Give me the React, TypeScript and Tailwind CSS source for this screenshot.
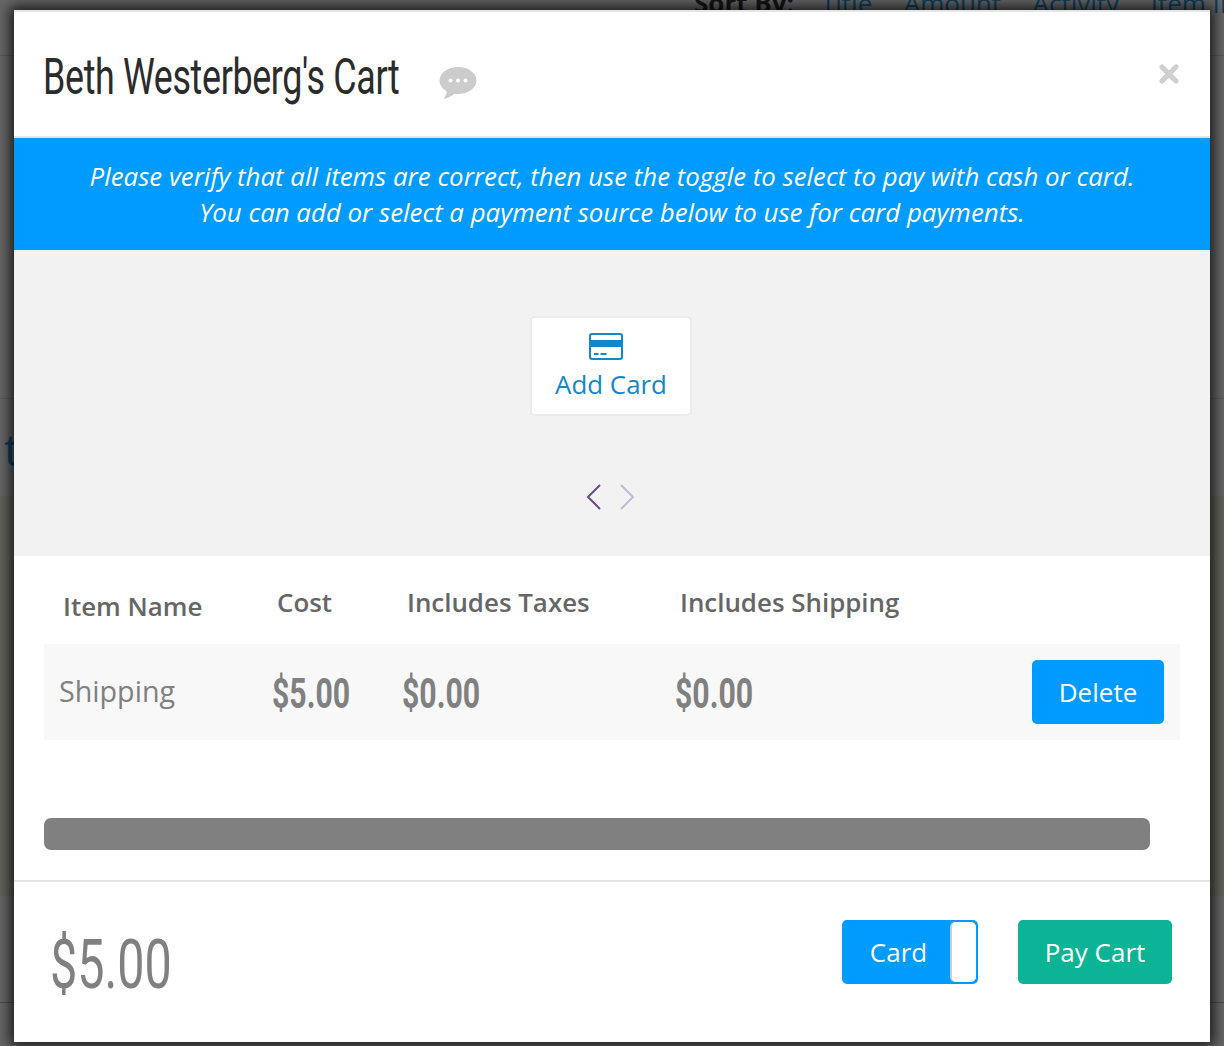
import { X } from "lucide-react"

const bodyFont = "font-['Open_Sans',sans-serif]"
// the price and title face is a tall condensed one, so Roboto gets squeezed into its width
const headFont = "font-['Roboto',sans-serif]"

function ChatIcon() {
  return (
    <svg viewBox="0 0 38 34" className="h-[34px] w-[38px]" aria-hidden="true">
      <path
        fill="#cccccc"
        d="M19 1C8.8 1 .5 7.1.5 14.6c0 4.4 2.9 8.3 7.3 10.8-.3 2.6-1.6 5.1-3.2 7.4 3.9-.4 8-2.6 10.7-5 1.2.2 2.4.3 3.7.3 10.2 0 18.5-6 18.5-13.5S29.2 1 19 1z"
      />
      <circle cx="11.5" cy="14.5" r="2" fill="#fff" />
      <circle cx="19" cy="14.5" r="2" fill="#fff" />
      <circle cx="26.5" cy="14.5" r="2" fill="#fff" />
    </svg>
  )
}

function CardIcon() {
  return (
    <svg viewBox="0 0 34 27" className="mr-[10px] h-[27px] w-[34px]" aria-hidden="true">
      <rect x="1" y="1" width="32" height="25" rx="2" fill="none" stroke="#1587c8" strokeWidth="2" />
      <rect x="1" y="7" width="32" height="7" fill="#1587c8" />
      <rect x="5" y="20" width="4.5" height="2" fill="#1587c8" />
      <rect x="11.5" y="20" width="6" height="2" fill="#1587c8" />
    </svg>
  )
}

function Arrows() {
  return (
    <div className="mr-[4px] mt-[67px] flex items-center gap-[17px]">
      <svg viewBox="0 0 16 28" className="h-[28px] w-[16px]" aria-hidden="true">
        <path d="M14 2 2 14l12 12" fill="none" stroke="#6b4a8f" strokeWidth="2" />
      </svg>
      <svg viewBox="0 0 16 28" className="h-[28px] w-[16px]" aria-hidden="true">
        <path d="m2 2 12 12L2 26" fill="none" stroke="#c6b9d6" strokeWidth="2" />
      </svg>
    </div>
  )
}

export default function App() {
  return (
    <div className={`relative h-[1046px] w-[1224px] overflow-hidden bg-[#666666] ${bodyFont}`}>
      {/* dimmed page behind the modal */}
      <div className="absolute left-0 top-[55px] h-px w-full bg-[#5a5a5a]" />
      <div className="absolute left-0 top-[398px] h-px w-full bg-[#5a5a5a]" />
      <div className="absolute left-0 top-[1002px] h-px w-full bg-[#4c4c4c]" />
      <div className="absolute left-0 top-[496px] h-[400px] w-full bg-[#62625a]" />
      <div className="absolute left-[694px] top-[-15px] flex gap-[31.5px] whitespace-nowrap text-[26px] leading-[36px] text-[#0b3f63]">
        <span className="mr-[-4.5px] font-bold text-[#151515]">Sort By:</span>
        <span>Title</span>
        <span>Amount</span>
        <span>Activity</span>
        <span>Item ID</span>
      </div>
      <span className="absolute left-[4px] top-[425px] text-[44px] leading-[48px] text-[#0b3f63]">t</span>

      <div className="absolute left-[14px] top-[10px] flex h-[1032px] w-[1196px] flex-col bg-white shadow-[0_0_12px_4px_rgba(0,0,0,0.75)]">
        <header className="relative flex h-[128px] shrink-0 items-start border-y-2 border-[#e5e5e5] pl-[29px]">
          <h1 className={`mt-[36px] w-[355px] origin-left scale-x-[0.717] whitespace-nowrap text-[50px] leading-[58px] tracking-[-0.5px] text-[#2b2b2b] ${headFont}`}>
            Beth Westerberg's Cart
          </h1>
          <div className="ml-[41px] mt-[54px]">
            <ChatIcon />
          </div>
          <X className="absolute right-[27px] top-[48px] h-[28px] w-[28px] text-[#cfcfcf]" strokeWidth={4.5} />
        </header>

        <div className="flex h-[112px] shrink-0 flex-col items-center justify-center bg-[#009bff] text-[25.85px] italic leading-[36px] text-white">
          <p>Please verify that all items are correct, then use the toggle to select to pay with cash or card.</p>
          <p>You can add or select a payment source below to use for card payments.</p>
        </div>

        <section className="flex h-[306px] shrink-0 flex-col items-center bg-[#f2f2f2] pt-[66px]">
          <button className="mr-[2px] flex h-[100px] w-[162px] flex-col items-center rounded-[5px] border-2 border-[#e8ebef] bg-white pt-[15px] text-[25.9px] leading-[34px] text-[#1587c8]">
            <CardIcon />
            <span className="mt-[7px]">Add Card</span>
          </button>
          <Arrows />
        </section>

        <section className="flex h-[88px] shrink-0 pl-[30px] text-[25.9px] font-semibold text-[#666666]">
          <span className="ml-[19px] mt-[32px] w-[214px] leading-[36px]">Item Name</span>
          <span className="mt-[28px] w-[130px] leading-[36px]">Cost</span>
          <span className="mt-[28px] w-[273px] leading-[36px]">Includes Taxes</span>
          <span className="mt-[28px] leading-[36px]">Includes Shipping</span>
        </section>

        <div className="mx-[30px] flex h-[96px] shrink-0 items-center bg-[#f8f8f8] pl-[15px] pr-[16px] text-[#808080]">
          <span className="mt-[-2px] w-[213px] text-[28.7px] leading-[36px]">Shipping</span>
          <span className={`mt-[2px] w-[130px] origin-left scale-x-[0.72] text-[42px] font-bold ${headFont}`}>$5.00</span>
          <span className={`mt-[2px] w-[273px] origin-left scale-x-[0.72] text-[42px] font-bold ${headFont}`}>$0.00</span>
          <span className={`mt-[2px] origin-left scale-x-[0.72] text-[42px] font-bold ${headFont}`}>$0.00</span>
          <button className="ml-auto flex h-[64px] w-[132px] items-center justify-center rounded-[5px] bg-[#009bff] text-[26px] text-white">
            Delete
          </button>
        </div>

        <div className="ml-[30px] mt-[78px] h-[32px] w-[1106px] shrink-0 rounded-[7px] bg-[#808080]" />

        <footer className="mt-[30px] flex flex-1 items-start border-t-2 border-[#e5e5e5] pl-[36px] pr-[38px]">
          <span className={`mt-[43px] origin-left scale-x-[0.713] text-[68px] leading-[80px] text-[#808080] ${headFont}`}>$5.00</span>
          <div className="ml-auto mt-[38px] flex gap-[40px]">
            <div className="flex h-[64px] w-[136px] items-stretch rounded-[5px] border-2 border-[#009bff] bg-[#009bff] text-[26px] text-white">
              <span className="flex flex-1 items-center justify-center pl-[3px]">Card</span>
              <span className="w-[26px] rounded-[5px] border-l-2 border-[#cccccc] bg-white" />
            </div>
            <button className="flex h-[64px] w-[154px] items-center justify-center rounded-[5px] bg-[#0cb394] text-[26px] text-white">
              Pay Cart
            </button>
          </div>
        </footer>
      </div>
    </div>
  )
}
